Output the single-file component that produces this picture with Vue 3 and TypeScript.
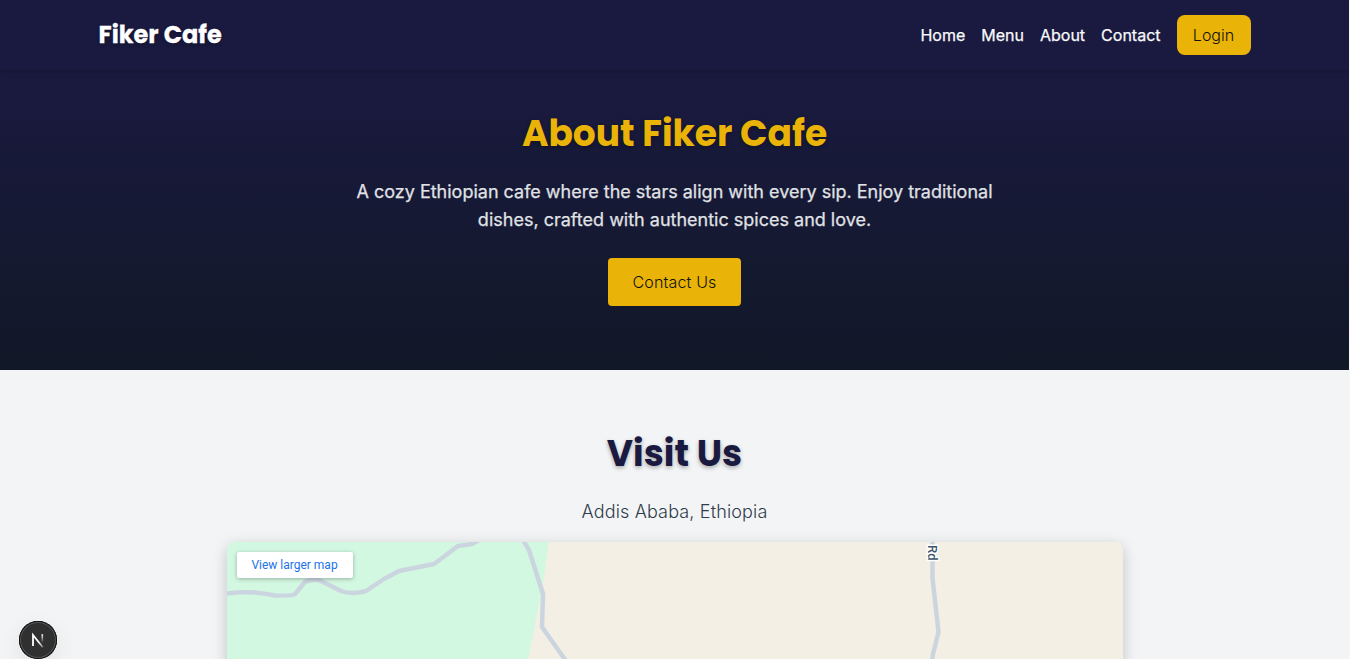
<script setup lang="ts">
const links: string[] = ['Home', 'Menu', 'About', 'Contact']
</script>

<template>
  <div class="page">
    <header class="header">
      <div class="bar">
        <a class="logo">Fiker Cafe</a>
        <nav class="nav">
          <a v-for="link in links" :key="link" class="link">{{ link }}</a>
          <button class="login">Login</button>
        </nav>
      </div>
    </header>
    <section class="hero">
      <h1 class="title">About Fiker Cafe</h1>
      <p class="lead">A cozy Ethiopian cafe where the stars align with every sip. Enjoy traditional dishes, crafted with authentic spices and love.</p>
      <button class="cta">Contact Us</button>
    </section>
    <section class="visit">
      <h2 class="heading">Visit Us</h2>
      <p class="place">Addis Ababa, Ethiopia</p>
      <div class="map">
        <svg class="roads" width="896" height="400" viewBox="0 0 896 400">
          <rect width="896" height="400" fill="#f4efe4" />
          <path d="M0 0H322L316 42L301 118L260 400H0Z" fill="#d3f8e2" />
          <g fill="none" stroke="#cbd5df" stroke-width="4.500" stroke-linejoin="round">
            <path d="M0 51.500Q24 48 48 53.500Q66 54 68 52L78 40Q83 37 92 38L114 49Q125 53 139 49L157 37L172 29L207 22L231 4L245 2L252 -2" />
            <path d="M296 -2L302 8L316 52L315 85L339 119L400 200" />
            <path d="M705.500 -2V36L711.500 90L705.500 114L706 140" />
          </g>
          <text class="road-name" transform="translate(701 3) rotate(90)">Rd</text>
        </svg>
        <a class="larger">View larger map</a>
      </div>
    </section>
    <div class="badge">
      <svg width="38" height="38" viewBox="0 0 38 38">
        <defs>
          <linearGradient id="diag" x1="17" y1="19" x2="25" y2="27" gradientUnits="userSpaceOnUse">
            <stop offset=".3" stop-color="#fff" />
            <stop offset="1" stop-color="#fff" stop-opacity=".2" />
          </linearGradient>
          <linearGradient id="stem" x1="0" y1="13" x2="0" y2="22" gradientUnits="userSpaceOnUse">
            <stop offset="0" stop-color="#fff" />
            <stop offset="1" stop-color="#fff" stop-opacity="0" />
          </linearGradient>
        </defs>
        <path d="M14 25V14L23.800 26.200" fill="none" stroke="url(#diag)" stroke-width="1.800" />
        <path d="M23.300 13.200V22" fill="none" stroke="url(#stem)" stroke-width="1.600" />
      </svg>
    </div>
  </div>
</template>

<style>
body {
  margin: 0;
  background: #f8f8f9;
  overflow: hidden;
}
</style>

<style scoped>
.page {
  width: 1349px;
  height: 659px;
  overflow: hidden;
  background: #f3f4f6;
  font-family: Inter, "Liberation Sans", sans-serif;
}
.header {
  position: relative;
  z-index: 1;
  height: 70px;
  background: #1a1a40;
  box-shadow: 0 4px 6px -1px rgba(0, 0, 0, .1), 0 2px 4px -2px rgba(0, 0, 0, .1);
}
.bar {
  width: 1152px;
  height: 70px;
  margin: 0 auto;
  display: flex;
  align-items: center;
  justify-content: space-between;
}
.logo {
  font: 700 24px/32px Poppins, Inter, sans-serif;
  color: #fff;
  -webkit-text-stroke: .3px #fff;
  text-shadow: 0 2px 4px rgba(0, 0, 0, .3);
}
.nav {
  display: flex;
  align-items: center;
  gap: 16px;
}
.link {
  font-size: 16px;
  line-height: 24px;
  font-weight: 400;
  color: #f9fafb;
  -webkit-text-stroke: .25px #f9fafb;
}
button {
  border: 0;
  margin: 0;
  background: #eab308;
  color: #111;
  font: 400 16px/24px Inter, sans-serif;
}
.login {
  width: 74px;
  height: 40px;
  padding: 8px 0;
  border-radius: 8px;
  font-weight: 360;
}
.hero {
  height: 300px;
  box-sizing: border-box;
  padding-top: 41px;
  text-align: center;
  background: linear-gradient(#1a1a40, #111827);
}
.title,
.heading {
  margin: 0;
  font: 700 36px/45px Poppins, Inter, sans-serif;
  color: #eab308;
  text-shadow: 0 2px 4px rgba(0, 0, 0, .3);
}
.lead {
  width: 672px;
  margin: 22px auto 24px;
  font-size: 18px;
  line-height: 28px;
  font-weight: 400;
  color: #e0e2e6;
  -webkit-text-stroke: .25px #e0e2e6;
}
.cta {
  width: 133px;
  height: 48px;
  padding: 12px 0;
  border-radius: 4px;
  font-weight: 360;
  letter-spacing: .15px;
}
.visit {
  padding-top: 61px;
  text-align: center;
}
.heading {
  color: #1a1a40;
}
.place {
  margin: 22px 0 16px;
  font-size: 18px;
  line-height: 28px;
  font-weight: 360;
  letter-spacing: .15px;
  color: #303b4b;
}
.map {
  position: relative;
  width: 896px;
  height: 400px;
  margin: 0 auto;
  border-radius: 8px;
  overflow: hidden;
  box-shadow: 0 4px 15px rgba(0, 0, 0, .2);
}
.roads {
  display: block;
}
.road-name {
  font: 500 13px Roboto, sans-serif;
  fill: #40566e;
  stroke: #fff;
  stroke-width: 3px;
  paint-order: stroke;
}
.larger {
  position: absolute;
  left: 10px;
  top: 10px;
  width: 116px;
  height: 26px;
  border-radius: 2px;
  background: #fff;
  box-shadow: 0 1px 4px rgba(0, 0, 0, .3);
  font: 400 12px/26px Roboto, sans-serif;
  color: #1a73e8;
}
.badge {
  position: absolute;
  z-index: 2;
  left: 19px;
  top: 621px;
  width: 38px;
  height: 38px;
  border-radius: 50%;
  background: #303030;
  box-shadow: inset 0 0 0 1px #111, inset 0 0 0 2px #555, 0 8px 24px rgba(0, 0, 0, .08);
}
</style>
